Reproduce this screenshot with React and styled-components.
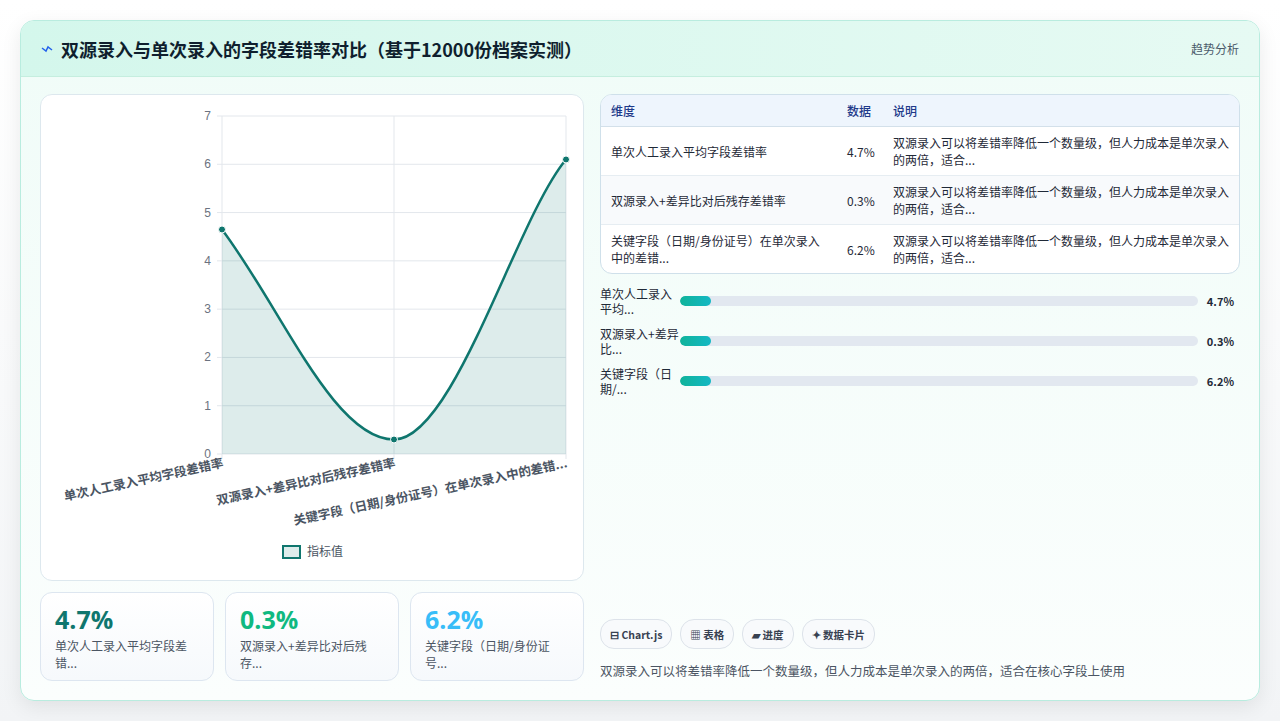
import React from "react";
import styled, { createGlobalStyle } from "styled-components";

const Global = createGlobalStyle`
  body { margin: 0; background: #f4f6f8; font-family: "Noto Sans CJK SC", "Noto Sans", sans-serif; }
`;

const Page = styled.div`
  width: 1280px;
  height: 721px;
  padding: 20px;
  box-sizing: border-box;
  background: linear-gradient(180deg, #ffffff 0%, #f2f4f6 100%);
`;
const Card = styled.div`
  height: 679px;
  border: 1px solid #b9ecdf;
  border-radius: 14px;
  overflow: hidden;
  background: linear-gradient(180deg, #f0fcf8 0%, #fbfefd 100%);
  box-shadow: 0 6px 20px rgba(0, 0, 0, 0.08);
  display: flex;
  flex-direction: column;
`;
const Header = styled.div`
  height: 55px;
  flex-shrink: 0;
  display: flex;
  align-items: center;
  justify-content: space-between;
  padding: 0 20px;
  background: linear-gradient(90deg, #d4f7ec 0%, #e6faf3 100%);
  border-bottom: 1px solid #c5eedf;
`;
const Title = styled.h1`
  margin: 0;
  font-size: 18px;
  font-weight: 700;
  color: #0f1f2e;
  display: flex;
  align-items: center;
  gap: 8px;
`;
const Tag = styled.span`
  font-size: 12px;
  color: #4b5a6a;
`;
const Body = styled.div`
  flex: 1;
  display: grid;
  grid-template-columns: 544px 1fr;
  gap: 16px;
  padding: 17px 19px 17px 19px;
`;
const Left = styled.div`
  display: flex;
  flex-direction: column;
  gap: 11px;
`;
const ChartBox = styled.div`
  height: 487px;
  box-sizing: border-box;
  background: #fff;
  border: 1px solid #dde8ee;
  border-radius: 12px;
  position: relative;
`;
const Stats = styled.div`
  display: grid;
  grid-template-columns: repeat(3, 1fr);
  gap: 11px;
`;
const Stat = styled.div`
  height: 89px;
  box-sizing: border-box;
  border: 1px solid #dde6f0;
  border-radius: 12px;
  background: linear-gradient(180deg, #fff, #f6f9fc);
  padding: 10px 14px;
`;
const StatVal = styled.div`
  font-family: "Open Sans", sans-serif;
  font-size: 25px;
  font-weight: 700;
  color: ${(p) => p.c};
  line-height: 32px;
`;
const StatLbl = styled.div`
  margin-top: 2px;
  font-size: 12px;
  line-height: 17px;
  color: #4b5563;
`;
const Right = styled.div`
  display: flex;
  flex-direction: column;
`;
const Table = styled.table`
  width: 100%;
  border-collapse: separate;
  border-spacing: 0;
  border: 1px solid #cfe0ea;
  border-radius: 12px;
  overflow: hidden;
  font-size: 12px;
  color: #1f2937;
  background: #fff;
  th {
    text-align: left;
    font-weight: 500;
    color: #1e3a8a;
    background: #eef5fd;
    height: 31px;
    padding: 0 10px;
    border-bottom: 1px solid #d3e0ea;
  }
  td {
    height: 48px;
    padding: 0 8px 0 10px;
    line-height: 17px;
    border-bottom: 1px solid #e6edf2;
  }
  tr:nth-child(2) td { background: #f8fafc; }
  tr:last-child td { border-bottom: none; }
`;
const Bars = styled.div`
  margin-top: 12px;
  display: flex;
  flex-direction: column;
  gap: 10px;
`;
const BarRow = styled.div`
  display: grid;
  grid-template-columns: 80px 1fr 42px;
  align-items: center;
`;
const BarLbl = styled.div`
  font-size: 12px;
  line-height: 15px;
  color: #1f2937;
`;
const Track = styled.div`
  height: 10px;
  border-radius: 5px;
  background: #e2e8f0;
  overflow: hidden;
`;
const Fill = styled.div`
  height: 100%;
  width: 31px;
  border-radius: 5px;
  background: linear-gradient(90deg, #10b39a, #14b8c4);
`;
const BarVal = styled.div`
  text-align: right;
  font-size: 11px;
  font-weight: 700;
  color: #1f2937;
  padding-right: 6px;
`;
const Spacer = styled.div`flex: 1;`;
const Pills = styled.div`
  display: flex;
  gap: 8px;
`;
const Pill = styled.span`
  height: 28px;
  padding: 0 9px;
  display: flex;
  align-items: center;
  border: 1px solid #dde3ea;
  border-radius: 14px;
  background: #f8fafc;
  font-size: 10.5px;
  font-weight: 700;
  color: #374151;
`;
const Note = styled.div`
  margin-top: 12px;
  margin-bottom: 3px;
  font-size: 12.5px;
  color: #4b5563;
`;

const rows = [
  ["单次人工录入平均字段差错率", "4.7%"],
  ["双源录入+差异比对后残存差错率", "0.3%"],
  ["关键字段（日期/身份证号）在单次录入中的差错...", "6.2%"],
];
const desc = "双源录入可以将差错率降低一个数量级，但人力成本是单次录入的两倍，适合...";

const Chart = () => {
  const x0 = 181, x1 = 525, y0 = 359, h = 338;
  const y = (v) => y0 - (v / 7) * h;
  const pts = [[x0, y(4.65)], [(x0 + x1) / 2, y(0.3)], [x1, y(6.1)]];
  const d = `M${pts[0][0]},${pts[0][1]} C${x0 + 60},${pts[0][1] + 80} ${pts[1][0] - 60},${pts[1][1]} ${pts[1][0]},${pts[1][1]} S${x1 - 50},${pts[2][1] + 60} ${x1},${pts[2][1]}`;
  return (
    <svg width="542" height="485" style={{ position: "absolute", left: 0, top: 0 }}>
      {[0, 1, 2, 3, 4, 5, 6, 7].map((v) => (
        <g key={v}>
          <line x1={x0 - 5} x2={x1} y1={y(v)} y2={y(v)} stroke="#e3e7ec" />
          <text x={x0 - 11} y={y(v) + 4} fontSize="12" fill="#6b7280" textAnchor="end" fontFamily="Liberation Sans">{v}</text>
        </g>
      ))}
      {[x0, (x0 + x1) / 2, x1].map((x) => (
        <line key={x} x1={x} x2={x} y1={y(7)} y2={y0 + 5} stroke="#e3e7ec" />
      ))}
      <path d={`${d} L${x1},${y0} L${x0},${y0} Z`} fill="rgba(15,118,110,0.14)" />
      <path d={d} fill="none" stroke="#0f766e" strokeWidth="2.5" />
      {pts.map(([px, py], i) => (
        <circle key={i} cx={px} cy={py} r="3.5" fill="#0f766e" stroke="#fff" strokeWidth="1" />
      ))}
      {["单次人工录入平均字段差错率", "双源录入+差异比对后残存差错率", "关键字段（日期/身份证号）在单次录入中的差错..."].map((t, i) => {
        const ax = x0 + i * 172 + 2;
        return (
          <text key={i} x={ax} y={y0 + 13} fontSize="12.5" fill="#4b5563" fontWeight="600" textAnchor="end"
            transform={`rotate(-12 ${ax} ${y0 + 13})`}>{t}</text>
        );
      })}
      <rect x="242" y="451" width="17" height="12" fill="rgba(15,118,110,0.14)" stroke="#0f766e" strokeWidth="2" />
      <text x="266" y="461" fontSize="12" fill="#4b5563">指标值</text>
    </svg>
  );
};

export default function App() {
  return (
    <Page>
      <Global />
      <Card>
        <Header>
          <Title>
            <svg width="12" height="8" viewBox="0 0 12 8"><path d="M1 3 L5 6 L7 2 L11 5" fill="none" stroke="#2563eb" strokeWidth="1.5" /></svg>
            双源录入与单次录入的字段差错率对比（基于12000份档案实测）
          </Title>
          <Tag>趋势分析</Tag>
        </Header>
        <Body>
          <Left>
            <ChartBox><Chart /></ChartBox>
            <Stats>
              <Stat><StatVal c="#0f766e">4.7%</StatVal><StatLbl>单次人工录入平均字段差错...</StatLbl></Stat>
              <Stat><StatVal c="#10b981">0.3%</StatVal><StatLbl>双源录入+差异比对后残存...</StatLbl></Stat>
              <Stat><StatVal c="#38bdf8">6.2%</StatVal><StatLbl>关键字段（日期/身份证号...</StatLbl></Stat>
            </Stats>
          </Left>
          <Right>
            <Table>
              <thead>
                <tr><th style={{ width: 216 }}>维度</th><th style={{ width: 26 }}>数据</th><th>说明</th></tr>
              </thead>
              <tbody>
                {rows.map(([a, b]) => (
                  <tr key={a}><td>{a}</td><td>{b}</td><td>{desc}</td></tr>
                ))}
              </tbody>
            </Table>
            <Bars>
              {[["单次人工录入平均...", "4.7%"], ["双源录入+差异比...", "0.3%"], ["关键字段（日期/...", "6.2%"]].map(([l, v]) => (
                <BarRow key={l}><BarLbl>{l}</BarLbl><Track><Fill /></Track><BarVal>{v}</BarVal></BarRow>
              ))}
            </Bars>
            <Spacer />
            <Pills>
              <Pill>⊟ Chart.js</Pill>
              <Pill>▦ 表格</Pill>
              <Pill>▰ 进度</Pill>
              <Pill>✦ 数据卡片</Pill>
            </Pills>
            <Note>双源录入可以将差错率降低一个数量级，但人力成本是单次录入的两倍，适合在核心字段上使用</Note>
          </Right>
        </Body>
      </Card>
    </Page>
  );
}
